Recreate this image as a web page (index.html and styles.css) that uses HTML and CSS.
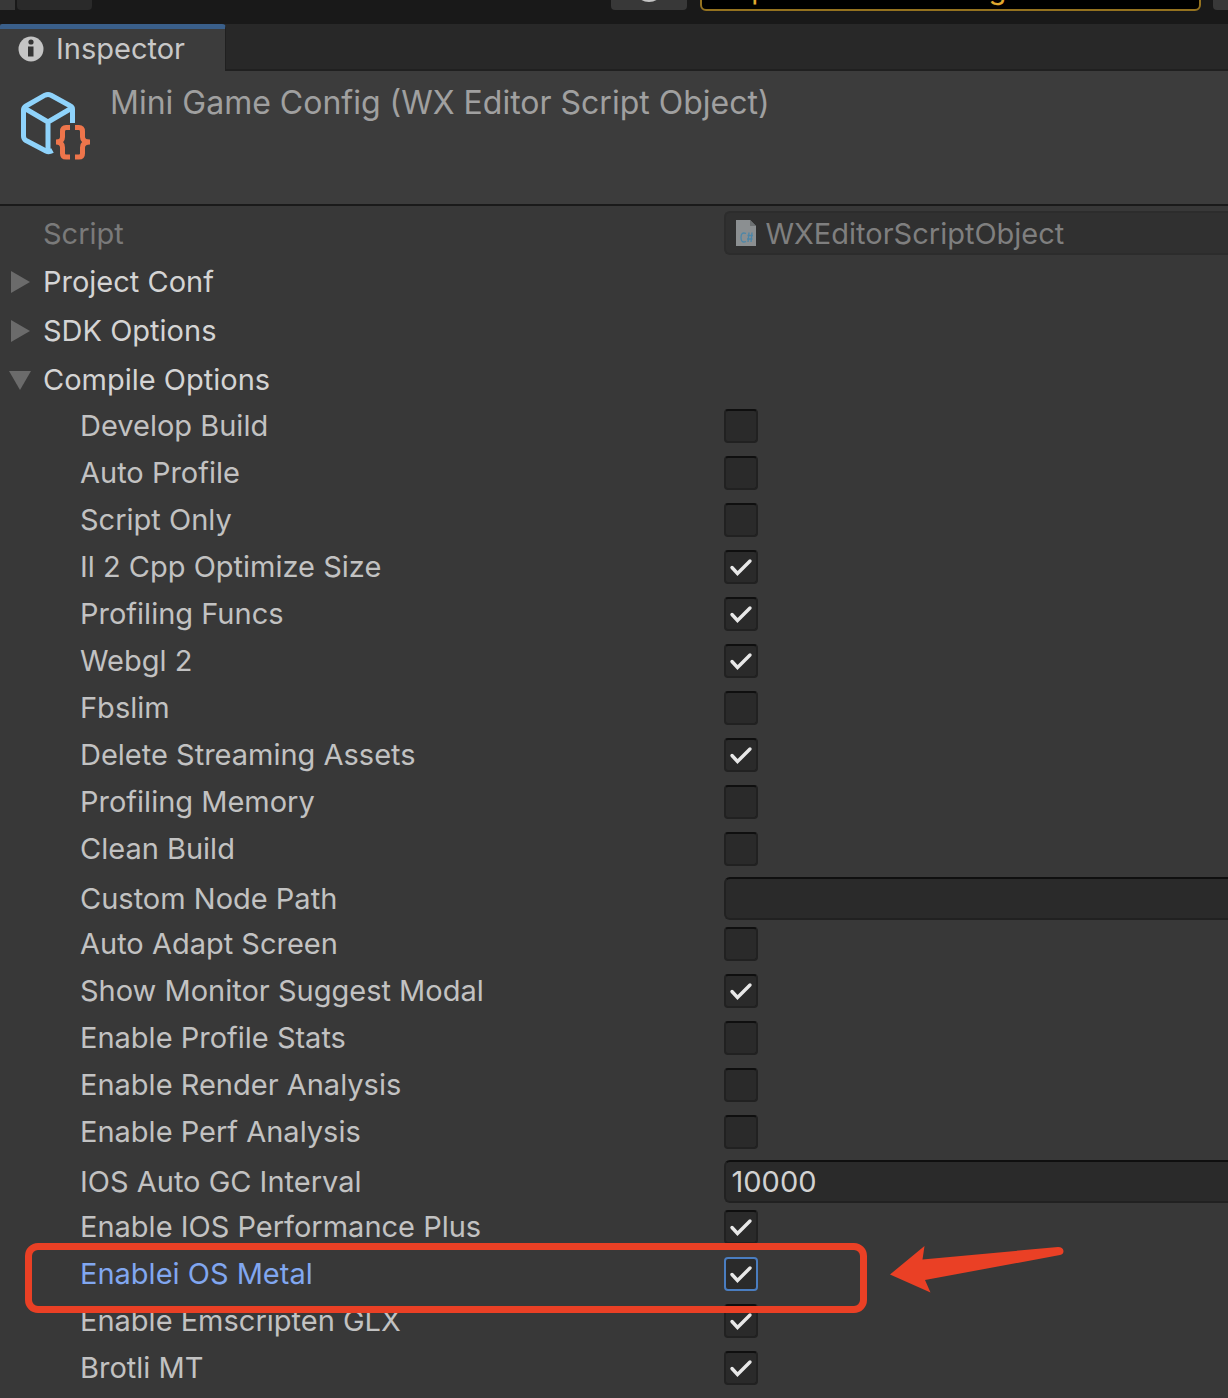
FILE: index.html
```html
<!DOCTYPE html>
<html lang="en">
<head>
<meta charset="utf-8">
<meta name="viewport" content="width=device-width, initial-scale=1">
<title>Inspector</title>
<link rel="stylesheet" href="styles.css">
</head>
<body>
<div class="toolbar">
  <button class="tool tool-edge" type="button" aria-label="Back"></button>
  <button class="tool tool-dim" type="button" aria-label="Step"></button>
  <span class="spacer"></span>
  <button class="tool tool-cloud" type="button" aria-label="Services"><svg width="24" height="18" viewBox="0 0 24 18" aria-hidden="true"><ellipse cx="12" cy="9" rx="12" ry="9" fill="#c4c4c4"/></svg></button>
  <button class="notice" type="button">Experimental Packages In Use</button>
  <button class="tool tool-edge" type="button" aria-label="Layers"></button>
</div>

<nav class="tabs">
  <a class="tab" href="#inspector">
    <svg width="26" height="26" viewBox="0 0 26 26" aria-hidden="true"><circle cx="13" cy="13" r="12.500" fill="#c4c4c4"/><circle cx="13" cy="6" r="2.600" fill="#333"/><path d="M10 10.500h5.500v10h-5.500z" fill="#333"/></svg>
    Inspector
  </a>
</nav>

<main class="inspector" id="inspector">
  <header class="object">
    <svg width="72" height="70" viewBox="0 0 72 70" aria-hidden="true">
      <g fill="none" stroke="#8fd3fb" stroke-width="5" stroke-linejoin="round">
        <path d="M52.500 32V18Q52.500 16 50.500 15L31 4.200Q28 2.800 25 4.200L6 15Q3.500 16.500 3.500 19V45Q3.500 48 6 49.500L26 60Q29 61.500 32.500 59.500"/>
        <path d="M5 17.500L28 31L51 17.500M28 31V59"/>
      </g>
      <g fill="none" stroke="#ee754b" stroke-width="5">
        <path d="M50 36.500H46Q42.500 36.500 42.500 40.500V46Q42.500 51 36 51Q42.500 51 42.500 56.500V62.500Q42.500 66 46 66H50"/>
        <path d="M55 36.500H59Q62.500 36.500 62.500 40.500V46Q62.500 51 70 51Q62.500 51 62.500 56.500V62.500Q62.500 66 59 66H55"/>
      </g>
    </svg>
    <h1>Mini Game Config (WX Editor Script Object)</h1>
  </header>

  <form class="fields">
    <div class="row row-script">
      <label for="script">Script</label>
      <div class="object-field">
        <svg width="20" height="26" viewBox="0 0 20 26" aria-hidden="true"><path d="M0 0H14L20 6V26H0z" fill="#8b8f91"/><path d="M14 0L20 6H14z" fill="#6d7173"/><path d="M10 13.500Q5 11.500 5 17.500T10 21.500M13 12.500L12 22M16 12.500L15 22M11.500 15.500H17M11 19H16.500" fill="none" stroke="#4c86a8" stroke-width="1.300"/></svg>
        <input id="script" type="text" value="WXEditorScriptObject" disabled>
      </div>
    </div>

    <button class="fold" type="button" aria-expanded="false"><svg width="22" height="22" viewBox="0 0 22 22" aria-hidden="true"><path d="M2 0L21 11L2 22z"/></svg>Project Conf</button>
    <button class="fold" type="button" aria-expanded="false"><svg width="22" height="22" viewBox="0 0 22 22" aria-hidden="true"><path d="M2 0L21 11L2 22z"/></svg>SDK Options</button>
    <button class="fold" type="button" aria-expanded="true"><svg width="22" height="22" viewBox="0 0 22 22" aria-hidden="true"><path d="M0 2H22L11 21z"/></svg>Compile Options</button>

    <div class="row"><label for="develop">Develop Build</label><input id="develop" type="checkbox"></div>
    <div class="row"><label for="autoprofile">Auto Profile</label><input id="autoprofile" type="checkbox"></div>
    <div class="row"><label for="scriptonly">Script Only</label><input id="scriptonly" type="checkbox"></div>
    <div class="row"><label for="il2cpp">Il 2 Cpp Optimize Size</label><input id="il2cpp" type="checkbox" checked></div>
    <div class="row"><label for="funcs">Profiling Funcs</label><input id="funcs" type="checkbox" checked></div>
    <div class="row"><label for="webgl">Webgl 2</label><input id="webgl" type="checkbox" checked></div>
    <div class="row"><label for="fbslim">Fbslim</label><input id="fbslim" type="checkbox"></div>
    <div class="row"><label for="streaming">Delete Streaming Assets</label><input id="streaming" type="checkbox" checked></div>
    <div class="row"><label for="memory">Profiling Memory</label><input id="memory" type="checkbox"></div>
    <div class="row"><label for="clean">Clean Build</label><input id="clean" type="checkbox"></div>
    <div class="row row-text"><label for="nodepath">Custom Node Path</label><input id="nodepath" type="text"></div>
    <div class="row"><label for="adapt">Auto Adapt Screen</label><input id="adapt" type="checkbox"></div>
    <div class="row"><label for="monitor">Show Monitor Suggest Modal</label><input id="monitor" type="checkbox" checked></div>
    <div class="row"><label for="stats">Enable Profile Stats</label><input id="stats" type="checkbox"></div>
    <div class="row"><label for="render">Enable Render Analysis</label><input id="render" type="checkbox"></div>
    <div class="row"><label for="perf">Enable Perf Analysis</label><input id="perf" type="checkbox"></div>
    <div class="row row-text"><label for="gc">IOS Auto GC Interval</label><input id="gc" type="text" value="10000"></div>
    <div class="row"><label for="plus">Enable IOS Performance Plus</label><input id="plus" type="checkbox" checked></div>
    <div class="row row-active">
      <label for="metal">Enablei OS Metal</label><input id="metal" type="checkbox" checked>
      <span class="marker"></span>
      <svg class="arrow" width="174" height="48" viewBox="0 0 174 48" aria-hidden="true"><path d="M0 28.500L34.500 0L32.500 13.500L168 1Q173 1 173.500 5Q173.500 8.500 170 9L35 34L40.500 46.500z" fill="#ea4025"/></svg>
    </div>
    <div class="row"><label for="glx">Enable Emscripten GLX</label><input id="glx" type="checkbox" checked></div>
    <div class="row"><label for="brotli">Brotli MT</label><input id="brotli" type="checkbox" checked></div>
    <div class="row"><span></span><input type="checkbox" aria-label="More"></div>
  </form>
</main>
</body>
</html>
```
FILE: styles.css
```css
* { box-sizing: border-box; }

body {
  display: flex;
  flex-direction: column;
  height: 100vh;
  margin: 0;
  overflow: hidden;
  background: #383838;
  color: #c2c2c2;
  font: 29px/36px Inter, "Liberation Sans", sans-serif;
  font-optical-sizing: none;
}

button, input { margin: 0; font: inherit; color: inherit; }

/* Toolbar, scrolled almost out of view */
.toolbar {
  display: flex;
  flex: none;
  align-items: flex-end;
  height: 24px;
  padding-bottom: 13px;
  overflow: hidden;
  background: #191919;
}
.tool {
  display: flex;
  align-items: flex-end;
  justify-content: center;
  flex: none;
  height: 40px;
  margin-bottom: 1px;
  padding: 0;
  border: 0;
  border-radius: 4px;
  background: #383838;
}
.tool-edge { width: 15px; border-radius: 0 0 0 4px; }
.tool-edge:first-child { border-radius: 0; }
.tool-dim { width: 75px; margin-left: 2px; background: #2a2a2a; }
.tool-cloud { width: 76px; padding-bottom: 8px; }
.spacer { flex: 1; }
.notice {
  flex: none;
  width: 501px;
  height: 44px;
  margin: 0 12px 0 13px;
  padding: 0 0 0 16px;
  border: 2px solid #94721f;
  border-radius: 6px;
  background: #000;
  color: #e0a92f;
  text-align: left;
  white-space: nowrap;
}

.tabs {
  display: flex;
  flex: none;
  height: 47px;
  background: linear-gradient(#282828 45px, #202020 45px);
}
.tab {
  display: flex;
  align-items: center;
  gap: 12px;
  width: 226px;
  padding: 0 0 2px 18px;
  border-top: 5px solid #3a5f8a;
  border-right: 1px solid #202020;
  border-radius: 2px 4px 0 0;
  background: #3c3c3c;
  color: #c8c8c8;
  text-decoration: none;
}

.inspector { flex: 1; min-height: 0; }
.object {
  display: flex;
  align-items: flex-start;
  gap: 18px;
  height: 135px;
  padding: 14px 20px 0;
  border-bottom: 2px solid #1a1a1a;
  background: #3c3c3c;
}
.object svg { flex: none; margin-top: 6px; }
.object h1 { margin: 0; color: #a0a0a0; font: inherit; font-size: 32px; }

.row {
  display: grid;
  grid-template-columns: calc(59% - 1px) 1fr;
  align-items: center;
  height: 47px;
}
.row label { padding-left: 80px; white-space: nowrap; }
.row-script { height: 49px; padding-top: 5px; align-items: start; }
.row-script label { padding: 5px 0 0 43px; color: #7a7a7a; }
.row-text { height: 48px; padding-top: 5px; }

.object-field {
  display: flex;
  align-items: center;
  gap: 10px;
  height: 44px;
  padding-left: 10px;
  border: 2px solid #2c2c2c;
  border-right: 0;
  border-radius: 6px 0 0 6px;
  background: #303030;
}
.object-field input {
  flex: 1;
  min-width: 0;
  padding: 2px 0 0;
  border: 0;
  background: none;
  color: #7f7f7f;
}
.row-text input {
  width: 100%;
  height: 43px;
  padding: 0 0 0 6px;
  border: 2px solid #212121;
  border-top-color: #0f0f0f;
  border-right: 0;
  border-radius: 6px 0 0 6px;
  background: #2a2a2a;
  color: #d2d2d2;
}

.fold {
  display: flex;
  align-items: center;
  gap: 12px;
  width: 100%;
  height: 49px;
  padding: 4px 0 0 9px;
  border: 0;
  background: none;
  color: #d4d4d4;
}
.fold svg { fill: #6b6b6b; }

input[type="checkbox"] {
  appearance: none;
  width: 34px;
  height: 34px;
  border: 2px solid #212121;
  border-top-color: #0f0f0f;
  border-radius: 4px;
  background: #2a2a2a;
}
input[type="checkbox"]:checked {
  background: #2a2a2a url("data:image/svg+xml,%3Csvg xmlns='http://www.w3.org/2000/svg' viewBox='0 0 34 34'%3E%3Cpath d='M8 17.500L13.500 23.500L26 11' fill='none' stroke='%23e8e8e8' stroke-width='3.400' stroke-linecap='round'/%3E%3C/svg%3E") center / 34px 34px no-repeat border-box;
}

.row-active { position: relative; color: #81a7f0; }
.row-active input[type="checkbox"] { border-color: #4a7dc0; }
.marker {
  position: absolute;
  z-index: 1;
  top: -7px;
  left: 25px;
  width: calc(59% + 117px);
  height: 70px;
  border: 7px solid #ea4025;
  border-radius: 13px;
  pointer-events: none;
}
.arrow {
  position: absolute;
  top: -4px;
  left: calc(59% + 165px);
}
```
